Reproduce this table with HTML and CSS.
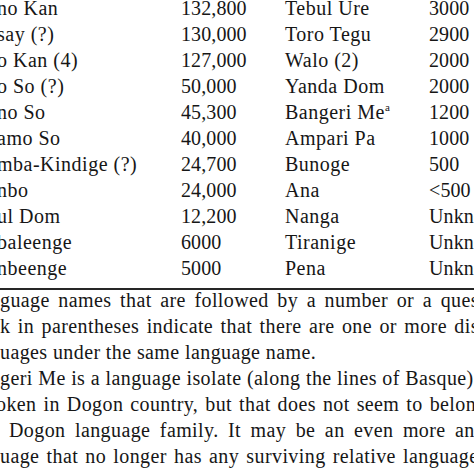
FILE: index.html
```html
<!DOCTYPE html>
<html>
<head>
<meta charset="utf-8">
<link rel="stylesheet" href="styles.css">
</head>
<body>
<div class="page">
  <div class="table">
    <span class="name">no Kan</span><span class="num">132,800</span><span class="name2">Tebul Ure</span><span class="num2">3000</span>
    <span class="name">say (?)</span><span class="num">130,000</span><span class="name2">Toro Tegu</span><span class="num2">2900</span>
    <span class="name">o Kan (4)</span><span class="num">127,000</span><span class="name2">Walo (2)</span><span class="num2">2000</span>
    <span class="name">o So (?)</span><span class="num">50,000</span><span class="name2">Yanda Dom</span><span class="num2">2000</span>
    <span class="name">no So</span><span class="num">45,300</span><span class="name2">Bangeri Me<sup>a</sup></span><span class="num2">1200</span>
    <span class="name">amo So</span><span class="num">40,000</span><span class="name2">Ampari Pa</span><span class="num2">1000</span>
    <span class="name">mba-Kindige (?)</span><span class="num">24,700</span><span class="name2">Bunoge</span><span class="num2">500</span>
    <span class="name">nbo</span><span class="num">24,000</span><span class="name2">Ana</span><span class="num2">&lt;500</span>
    <span class="name">ul Dom</span><span class="num">12,200</span><span class="name2">Nanga</span><span class="num2">Unknown</span>
    <span class="name">baleenge</span><span class="num">6000</span><span class="name2">Tiranige</span><span class="num2">Unknown</span>
    <span class="name">nbeenge</span><span class="num">5000</span><span class="name2">Pena</span><span class="num2">Unknown</span>
  </div>
  <div class="rule"></div>
  <div class="notes">
    <div class="line l1">guage names that are followed by a number or a question</div>
    <div class="line l2">k in parentheses indicate that there are one or more distinct</div>
    <div class="line l3">uages under the same language name.</div>
    <div class="line l4">geri Me is a language isolate (along the lines of Basque) that is</div>
    <div class="line l5">oken in Dogon country, but that does not seem to belong</div>
    <div class="line l6">Dogon language family. It may be an even more ancient</div>
    <div class="line l7">uage that no longer has any surviving relative languages.</div>
  </div>
</div>
</body>
</html>
```
FILE: styles.css
```css
html, body {
  margin: 0;
  padding: 0;
  background: #ffffff;
}
body {
  width: 474px;
  height: 474px;
  overflow: hidden;
  font-family: "Liberation Serif", "Times New Roman", serif;
  font-size: 20px;
  color: #161616;
}
.page {
  width: 474px;
  overflow: hidden;
}
.table {
  display: grid;
  grid-template-columns: 184px 104px 144px 80px;
  grid-auto-rows: 26px;
  line-height: 26px;
  margin-top: -5px;
  margin-left: -3px;
  white-space: nowrap;
  letter-spacing: 0.5px;
}
.num,
.num2 {
  letter-spacing: 0.1px;
}
.table sup {
  font-size: 11px;
  line-height: 0;
  vertical-align: 8px;
  letter-spacing: 0;
}
.rule {
  height: 2px;
  background: #262626;
  margin-top: 7px;
}
.notes {
  margin-top: -3px;
  line-height: 26px;
  letter-spacing: 0.4px;
}
.line {
  white-space: nowrap;
  height: 26px;
}
.l1 { word-spacing: 3.2px; }
.l2 { word-spacing: 2px; }
.l3 { word-spacing: 0; }
.l4 { word-spacing: 0.1px; }
.l5 { word-spacing: 1.6px; margin-left: -4px; }
.l6 { word-spacing: 4.1px; padding-left: 9px; }
.l7 { word-spacing: 1.8px; }
```
